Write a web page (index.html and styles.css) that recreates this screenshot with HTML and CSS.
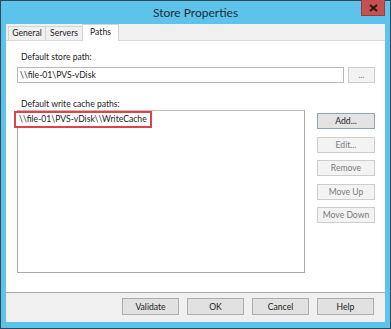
FILE: index.html
```html
<!DOCTYPE html>
<html lang="en">
<head>
  <meta charset="UTF-8" />
  <title>Store Properties</title>
  <link rel="stylesheet" href="styles.css">
</head>
<body>
  <div class="frame">
    <div class="titlebar">
      <span></span>
      <span class="title">Store Properties</span>
      <button class="close" title="Close">
        <svg width="9" height="8" viewBox="0 0 9 8"><path d="M1 1 L8 7 M8 1 L1 7" stroke="#2a1a1a" stroke-width="2"/></svg>
      </button>
    </div>

    <div class="client">
      <div class="tabs">
        <div class="tab">General</div>
        <div class="tab">Servers</div>
        <div class="tab active">Paths</div>
      </div>

      <div class="panel">
        <label class="label">Default store path:</label>
        <div class="row">
          <div class="input">\\file-01\PVS-vDisk</div>
          <button class="btn small disabled">...</button>
        </div>

        <label class="label second">Default write cache paths:</label>
        <div class="row grow">
          <div class="listbox">
            <span class="item">\\file-01\PVS-vDisk\\WriteCache</span>
          </div>
          <div class="side">
            <button class="btn default">Add...</button>
            <button class="btn disabled">Edit...</button>
            <button class="btn disabled">Remove</button>
            <button class="btn disabled">Move Up</button>
            <button class="btn disabled">Move Down</button>
          </div>
        </div>
      </div>

      <div class="footer">
        <button class="btn wide">Validate</button>
        <button class="btn wide">OK</button>
        <button class="btn wide">Cancel</button>
        <button class="btn wide">Help</button>
      </div>
    </div>
  </div>
</body>
</html>
```

FILE: styles.css
```css
html, body {
  margin: 0; padding: 0;
  width: 391px; height: 329px;
  overflow: hidden;
  font-family: Lato, "Open Sans", sans-serif;
  font-size: 8.6px;
  color: #1b1b1b;
}
.frame {
  box-sizing: border-box;
  width: 391px; height: 329px;
  border: 1px solid #2c4a5c;
  background: #5ec3ea;
  padding: 0 5px 6px 5px;
  display: flex; flex-direction: column;
}
.titlebar {
  height: 23px;
  display: grid;
  grid-template-columns: 1fr auto 1fr;
}
.title {
  font-size: 12px;
  line-height: 23px;
  color: #1d2b38;
}
.close {
  justify-self: end;
  align-self: start;
  width: 24px; height: 16px;
  margin-top: -1px;
  padding: 0;
  border: 1px solid #9c3b3b;
  border-top: none;
  background: #c75050;
  display: flex; justify-content: center; align-items: center;
}
.client {
  flex: 1;
  background: #f0f0f0;
  display: flex; flex-direction: column;
}
.tabs {
  height: 16px;
  display: flex;
  align-items: flex-end;
  padding-left: 2px;
}
.tab {
  box-sizing: border-box;
  width: 37px; height: 14px;
  border: 1px solid #d3d3d3;
  border-bottom: none;
  border-right: none;
  background: #f0f0f0;
  text-align: center;
  line-height: 13px;
}
.tab.active {
  height: 17px;
  margin-bottom: -1px;
  background: #fff;
  border-right: 1px solid #d3d3d3;
  position: relative;
  line-height: 15px;
}
.panel {
  flex: 1;
  background: #fff;
  border-top: 1px solid #d9d9d9;
  border-bottom: 1px solid #a6a6a6;
  padding: 11px 10px 19px 11px;
  display: flex; flex-direction: column;
}
.label {
  display: block;
  line-height: 11px;
  padding-left: 4px;
}
.label.second {
  margin-top: 16px;
}
.row {
  display: flex;
  gap: 4px;
  margin-top: 4px;
}
.row.grow {
  flex: 1;
  margin-top: 0;
  gap: 12px;
}
.input {
  flex: 1;
  box-sizing: border-box;
  height: 16px;
  border: 1px solid #b9b9b9;
  padding-left: 2px;
  line-height: 14px;
}
.listbox {
  flex: 1;
  box-sizing: border-box;
  border: 1px solid #a9a9a9;
  border-top-color: #bdbdbd;
}
.item {
  display: inline-block;
  margin: 0 0 0 -4px;
  padding: 1px 3px 1px 3px;
  line-height: 11px;
  border: 2px solid #e0414c;
  background: #fff;
}
.side {
  width: 58px;
  display: flex; flex-direction: column;
  gap: 7.5px;
  padding-top: 3px;
}
.btn {
  box-sizing: border-box;
  height: 16px;
  padding: 0;
  font-family: inherit;
  font-size: 8.6px;
  color: #1b1b1b;
  background: #e1e1e1;
  border: 1px solid #adadad;
}
.btn.default {
  border-color: #8fa4b8;
  background: #e3e3e3;
}
.btn.disabled {
  background: #f3f3f3;
  border-color: #cdcdcd;
  color: #7a7a7a;
}
.btn.small {
  width: 27px;
}
.footer {
  height: 29px;
  display: flex;
  justify-content: flex-end;
  gap: 8px;
  padding: 5px 11px 0 0;
  box-sizing: border-box;
}
.btn.wide {
  width: 57px;
  height: 17px;
}
```
